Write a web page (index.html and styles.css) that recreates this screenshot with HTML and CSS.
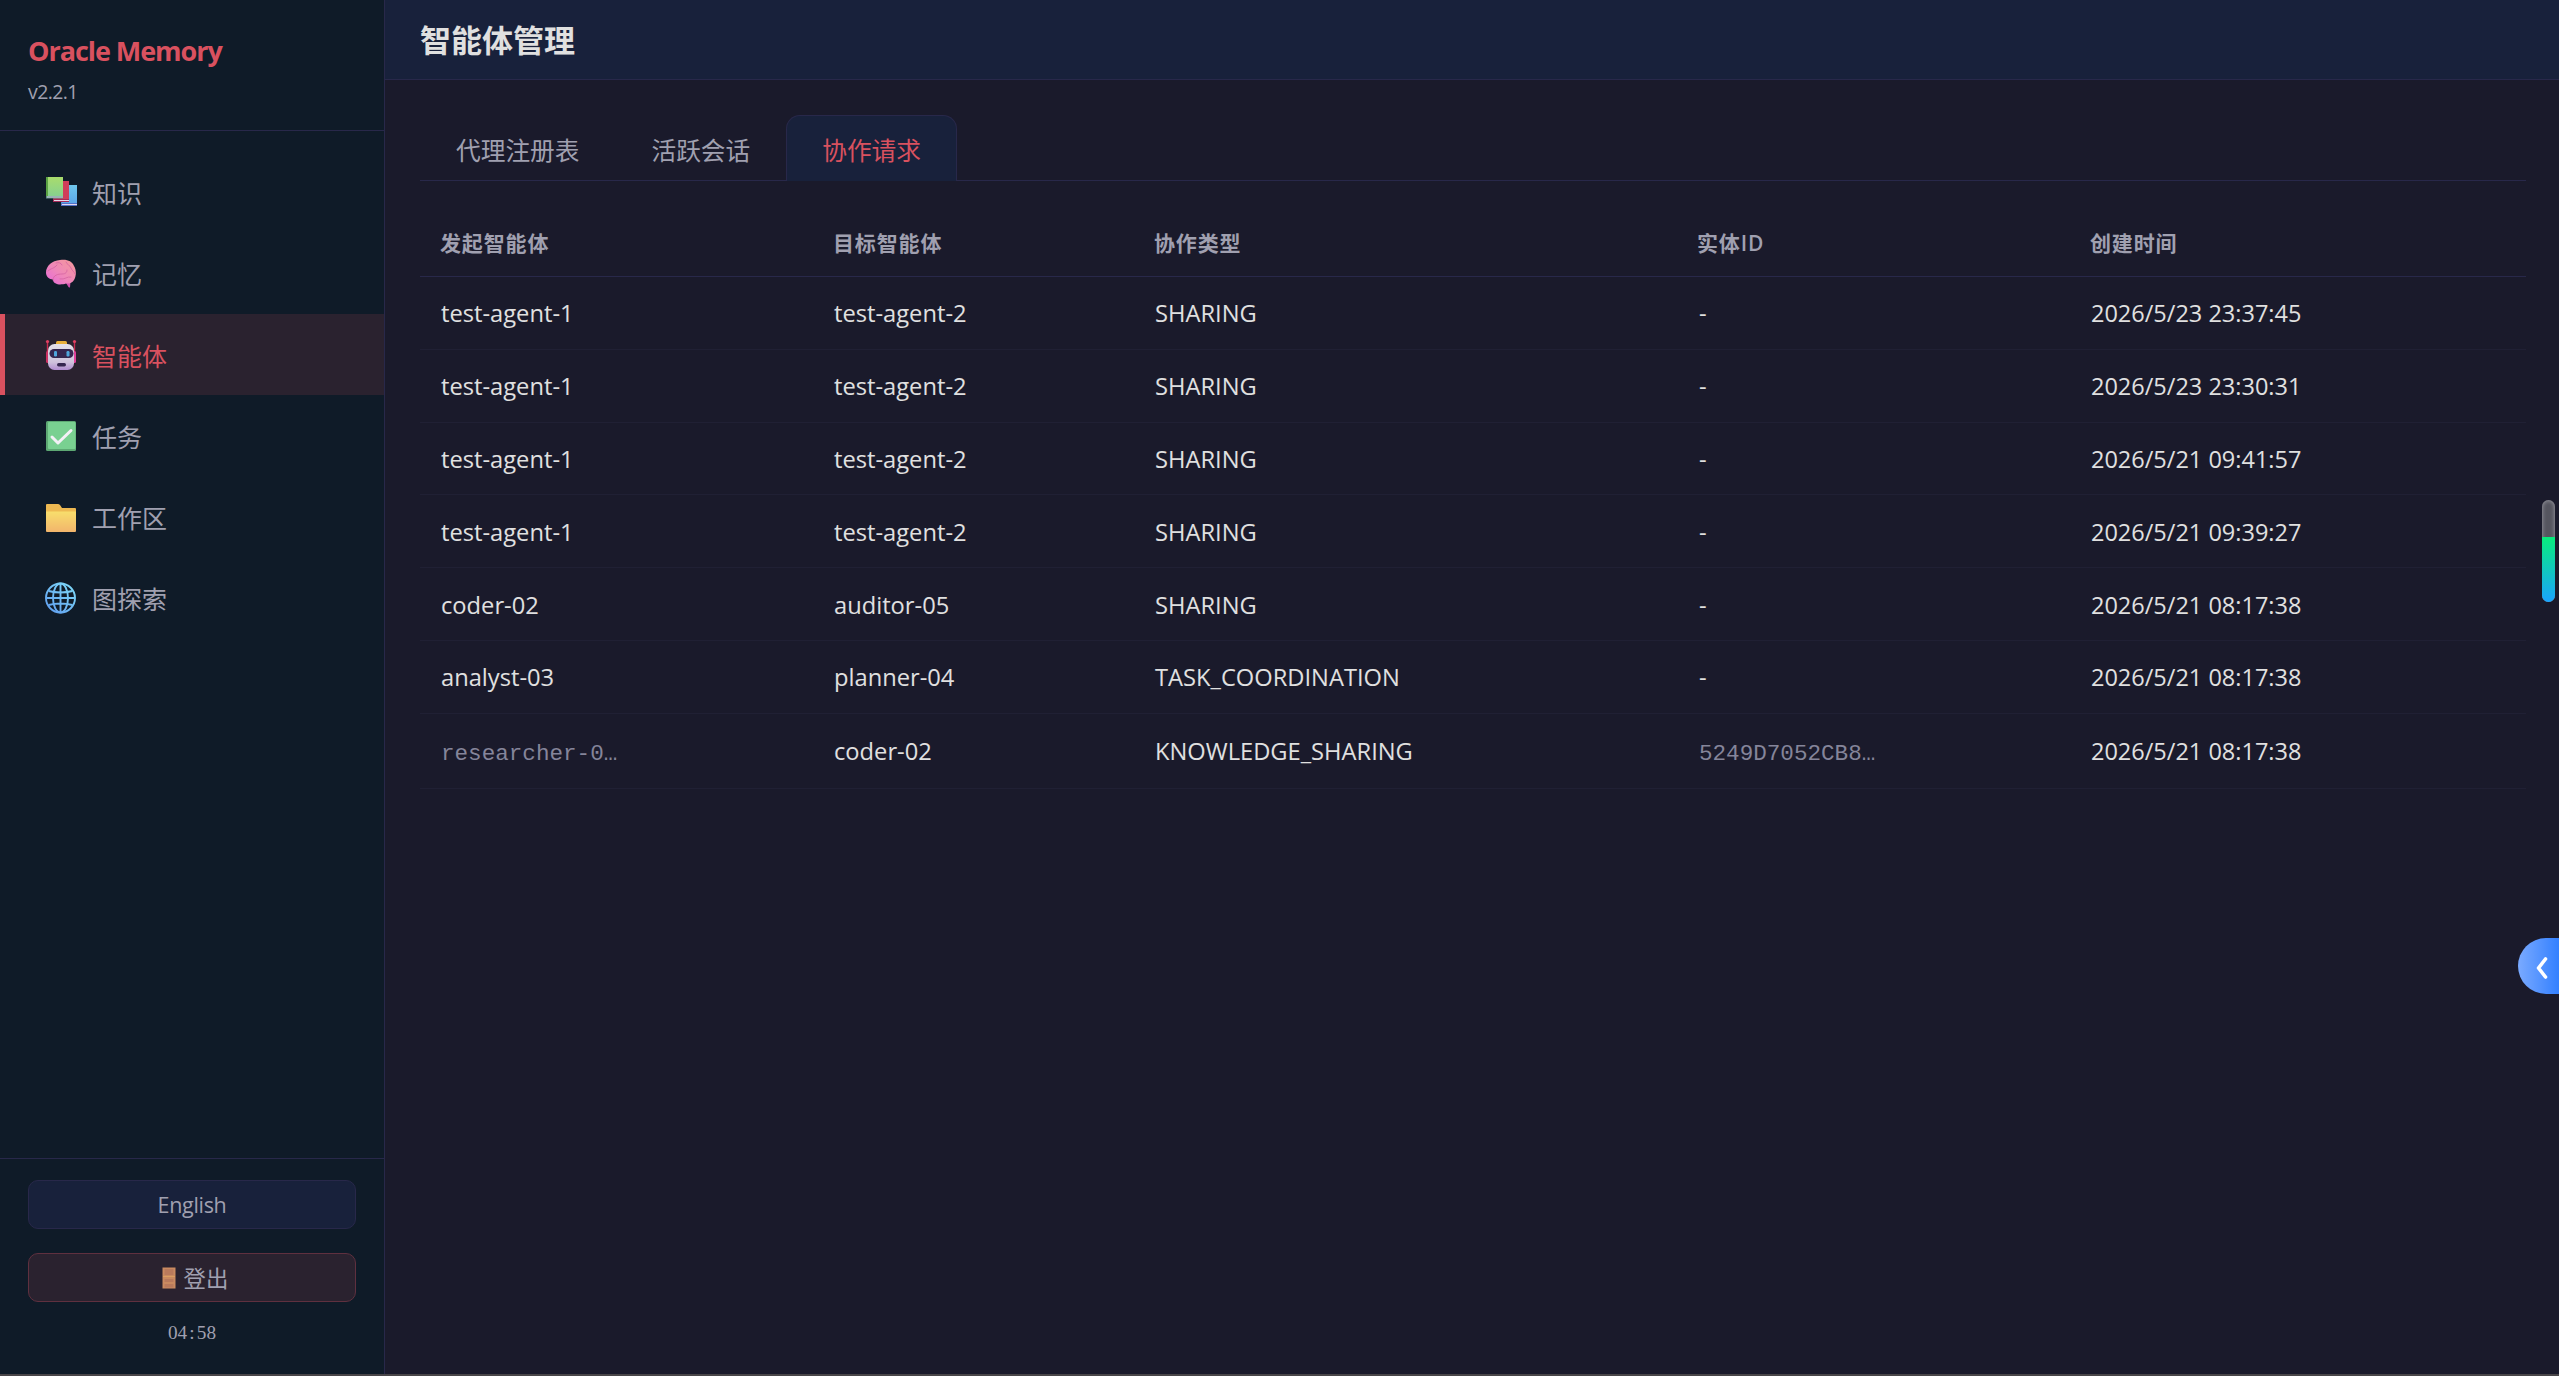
FILE: index.html
```html
<!DOCTYPE html>
<html lang="zh-CN">
<head>
    <meta charset="UTF-8">
    <meta name="viewport" content="width=device-width, initial-scale=1.0">
    <title>Oracle Memory</title>
    <link rel="stylesheet" href="styles.css">
</head>
<body>
<div class="app">
    <aside class="sidebar">
        <div class="sidebar-header">
            <h1>Oracle Memory</h1>
            <span class="version">v2.2.1</span>
        </div>
        <nav class="nav">
            <a class="nav-item">
                <svg class="nav-icon" viewBox="0 0 32 32">
                    <defs>
                        <linearGradient id="bookGreen" x1="0" y1="0" x2="0" y2="1"><stop offset="0" stop-color="#a9dc6c"/><stop offset="1" stop-color="#85d090"/></linearGradient>
                        <linearGradient id="bookBlue" x1="0" y1="0" x2="0" y2="1"><stop offset="0" stop-color="#6fc6ec"/><stop offset="1" stop-color="#5aa4e8"/></linearGradient>
                    </defs>
                    <path d="M17 9h15v20h-16z" fill="url(#bookBlue)"/>
                    <path d="M16 27h16v3H16z" fill="#5472c8"/>
                    <path d="M17 28h15v1H17z" fill="#e2d8f0"/>
                    <path d="M9 5h15v20H8z" fill="#cf3d5a"/>
                    <path d="M8 23h16v3H8z" fill="#a52a58"/>
                    <path d="M9 24h15v1H9z" fill="#e8d8ea"/>
                    <path d="M1 1h17v20H1z" fill="url(#bookGreen)"/>
                    <path d="M1 1h2v19l-2 2z" fill="#5ba344"/>
                    <path d="M1 20h17v2.500H1z" fill="#5c8c84"/>
                    <path d="M2 20.500h16v1H2z" fill="#d8d8e6"/>
                </svg>
                <span>知识</span>
            </a>
            <a class="nav-item">
                <svg class="nav-icon" viewBox="0 0 32 32">
                    <defs>
                        <linearGradient id="brain" x1="1" y1="0" x2="0" y2="1"><stop offset="0" stop-color="#f39a98"/><stop offset=".55" stop-color="#ef86ba"/><stop offset="1" stop-color="#e667dc"/></linearGradient>
                    </defs>
                    <path d="M21 26l2.500 4q1 1 1.500 0l.500-5z" fill="#d04fae"/>
                    <path d="M15 3C22 2 27 4 29 9c2.500 4 2.500 10 0 14-2 3-5 4-8 3.500-3 1-8 1.500-10 0-2-.500-3-2-3-4-4 0-7-3-7-7C1 9 7 3.500 15 3z" fill="url(#brain)"/>
                    <path d="M3 14c3-3 6-2 9-6M8 23c0-5 5-6 9-6s5-2 5-4M11 6c3-1 5 0 6 2M21 5c1 3 4 3 5 6s3 3 4 6M15 22c5 1 7-3 11-2" fill="none" stroke="#d868a4" stroke-width="0.900" stroke-linecap="round"/>
                </svg>
                <span>记忆</span>
            </a>
            <a class="nav-item active">
                <svg class="nav-icon" viewBox="0 0 32 32">
                    <defs>
                        <linearGradient id="robot" x1="0" y1="0" x2="0" y2="1"><stop offset="0" stop-color="#e6e2ea"/><stop offset=".7" stop-color="#cfc2dc"/><stop offset="1" stop-color="#b18cd0"/></linearGradient>
                    </defs>
                    <path d="M2.500 2v12M29.500 2v12" stroke="#c92a50" stroke-width="1.400"/>
                    <circle cx="2.500" cy="2.500" r="1.600" fill="#e04062"/>
                    <circle cx="29.500" cy="2.500" r="1.600" fill="#e04062"/>
                    <rect x="1" y="12" width="4" height="12" rx="1.500" fill="#cc3162"/>
                    <rect x="27" y="12" width="4" height="12" rx="1.500" fill="#e0409a"/>
                    <rect x="11" y="2" width="11" height="5" rx="1.500" fill="#eab13c"/>
                    <rect x="3" y="5" width="26" height="26" rx="6.500" fill="url(#robot)"/>
                    <rect x="4.500" y="10" width="24" height="9" rx="4.500" fill="#35264f"/>
                    <rect x="9" y="12" width="3" height="5.500" rx="1.200" fill="#4fa5dc"/>
                    <rect x="21.500" y="12" width="3" height="5.500" rx="1.200" fill="#4fa5dc"/>
                    <rect x="12" y="24" width="9" height="3.500" rx="1.700" fill="#35264f"/>
                </svg>
                <span>智能体</span>
            </a>
            <a class="nav-item">
                <svg class="nav-icon" viewBox="0 0 32 32">
                    <rect x="1" y="1" width="30" height="30" rx="1.500" fill="#5da873"/>
                    <rect x="3" y="2" width="27.500" height="27" rx="1" fill="#79d091"/>
                    <path d="M7 17l6 6L26 10.500" fill="none" stroke="#f3f0f6" stroke-width="3" stroke-linecap="round" stroke-linejoin="round"/>
                </svg>
                <span>任务</span>
            </a>
            <a class="nav-item">
                <svg class="nav-icon" viewBox="0 0 32 32">
                    <defs>
                        <linearGradient id="folder" x1="0" y1="0" x2="0" y2="1"><stop offset="0" stop-color="#f8de6c"/><stop offset="1" stop-color="#f2b56c"/></linearGradient>
                    </defs>
                    <path d="M1 4q0-1 1-1h11q1 0 2 1l2 3h13q1 0 1 1v8H1z" fill="#eeb952"/>
                    <path d="M1 10.500h30V30q0 1-1 1H2q-1 0-1-1z" fill="url(#folder)"/>
                </svg>
                <span>工作区</span>
            </a>
            <a class="nav-item">
                <svg class="nav-icon" viewBox="0 0 32 32">
                    <defs>
                        <linearGradient id="globe" gradientUnits="userSpaceOnUse" x1="26" y1="4" x2="5" y2="28"><stop offset="0" stop-color="#7cd6f8"/><stop offset="1" stop-color="#62a2f0"/></linearGradient>
                    </defs>
                    <g fill="none" stroke="url(#globe)" stroke-width="1.900">
                        <circle cx="15.500" cy="16" r="14.500"/>
                        <ellipse cx="15.500" cy="16" rx="7.500" ry="14.500"/>
                        <path d="M15.500 1.500v29M1 16h29M3.500 9q12 3 24 0M3.500 23q12-3 24 0"/>
                    </g>
                </svg>
                <span>图探索</span>
            </a>
        </nav>
        <div class="sidebar-footer">
            <button class="btn-lang">English</button>
            <button class="btn-logout">
                <svg class="door" viewBox="0 0 14 22">
                    <rect x="0.500" y="0.500" width="13" height="21" fill="#c98a60"/>
                    <path d="M2.500 2h9v6h-9zM2.500 12h9v3h-9zM2.500 17h9v3.500h-9z" fill="#b97a5c"/>
                    <path d="M1 9.500h12" stroke="#dc9e62"/>
                </svg>
                <span>登出</span>
            </button>
            <div class="timer">04<span>:</span>58</div>
        </div>
    </aside>

    <main class="main">
        <header class="topbar">
            <h2>智能体管理</h2>
        </header>
        <section class="content">
            <div class="tabs">
                <button class="tab">代理注册表</button>
                <button class="tab">活跃会话</button>
                <button class="tab active">协作请求</button>
            </div>
            <table class="data-table">
                <colgroup>
                    <col class="col-source">
                    <col class="col-target">
                    <col class="col-type">
                    <col class="col-entity">
                    <col>
                </colgroup>
                <thead>
                    <tr><th>发起智能体</th><th>目标智能体</th><th>协作类型</th><th>实体<span class="latin">ID</span></th><th>创建时间</th></tr>
                </thead>
                <tbody>
                    <tr><td>test-agent-1</td><td>test-agent-2</td><td>SHARING</td><td>-</td><td>2026/5/23 23:37:45</td></tr>
                    <tr><td>test-agent-1</td><td>test-agent-2</td><td>SHARING</td><td>-</td><td>2026/5/23 23:30:31</td></tr>
                    <tr><td>test-agent-1</td><td>test-agent-2</td><td>SHARING</td><td>-</td><td>2026/5/21 09:41:57</td></tr>
                    <tr><td>test-agent-1</td><td>test-agent-2</td><td>SHARING</td><td>-</td><td>2026/5/21 09:39:27</td></tr>
                    <tr><td>coder-02</td><td>auditor-05</td><td>SHARING</td><td>-</td><td>2026/5/21 08:17:38</td></tr>
                    <tr><td>analyst-03</td><td>planner-04</td><td>TASK_COORDINATION</td><td>-</td><td>2026/5/21 08:17:38</td></tr>
                    <tr class="tall"><td><span class="mono">researcher-0…</span></td><td>coder-02</td><td>KNOWLEDGE_SHARING</td><td><span class="mono">5249D7052CB8…</span></td><td>2026/5/21 08:17:38</td></tr>
                </tbody>
            </table>
        </section>
    </main>
</div>

<!-- Floating widgets -->
<div class="meter"><div class="meter-fill"></div></div>
<button class="drawer-toggle">
    <svg viewBox="0 0 12 22"><path d="M9.500 2L2.500 11l7 9" fill="none" stroke="#fff" stroke-width="3.600" stroke-linecap="round" stroke-linejoin="round"/></svg>
</button>
</body>
</html>
```
FILE: styles.css
```css
* {
    box-sizing: border-box;
    margin: 0;
    padding: 0;
}
body {
    font-family: "Open Sans", "Noto Sans CJK SC", sans-serif;
    font-size: 24.5px;
    background-color: #1a1a2b;
    color: #e0e0e0;
    overflow: hidden;
}
button {
    font-family: inherit;
}
.app {
    display: flex;
    height: 100vh;
    border-bottom: 2px solid #484548;
}

/* Sidebar */
.sidebar {
    display: flex;
    flex-direction: column;
    width: 385px;
    background-color: #0f1b28;
    border-right: 1px solid #28284a;
}
.sidebar-header {
    height: 131px;
    padding: 32px 28px 0;
    border-bottom: 1px solid #28284a;
}
.sidebar-header h1 {
    font-size: 27px;
    line-height: 38px;
    letter-spacing: -1.05px;
    color: #d9515f;
}
.version {
    display: block;
    margin-top: 7px;
    font-size: 19.5px;
    line-height: 30px;
    letter-spacing: -0.6px;
    color: #a0a0b0;
}
.nav {
    flex: 1;
    padding-top: 20.6px;
}
.nav-item {
    display: flex;
    align-items: center;
    gap: 15px;
    height: 81.2px;
    padding-left: 40px;
    border-left: 5px solid transparent;
    color: #a0a0b0;
    font-size: 25px;
}
.nav-item.active {
    background-color: #2a222f;
    border-left-color: #d9515f;
    color: #d9515f;
}
.nav-icon {
    width: 32px;
    height: 32px;
}
.sidebar-footer {
    height: 216px;
    padding: 21px 28px 0;
    border-top: 1px solid #28284a;
}
.btn-lang,
.btn-logout {
    display: flex;
    align-items: center;
    justify-content: center;
    width: 100%;
    height: 49px;
    border: 1px solid #28284a;
    border-radius: 10px;
    background-color: #18213b;
    color: #a0a0b0;
    font-size: 21.5px;
    letter-spacing: -0.3px;
}
.btn-logout {
    gap: 8px;
    margin-top: 24px;
    padding-left: 6px;
    background-color: #2a222f;
    border-color: #5f303f;
    font-size: 22.4px;
    letter-spacing: 0;
}
.door {
    width: 14px;
    height: 22px;
}
.timer {
    margin-top: 17px;
    text-align: center;
    font-family: "Liberation Serif", serif;
    font-size: 19.25px;
    line-height: 28px;
    color: #a0a0b0;
}
.timer span {
    display: inline-block;
    width: 0.5em;
}

/* Main area */
.main {
    flex: 1;
}
.topbar {
    display: flex;
    align-items: center;
    height: 80px;
    padding: 0 35px;
    background-color: #18213b;
    border-bottom: 1px solid #28284a;
}
.topbar h2 {
    font-size: 31px;
    line-height: 40px;
}
.content {
    padding: 35px 33px 0 35px;
}
.tabs {
    display: flex;
    height: 66px;
    margin-bottom: 35px;
    border-bottom: 1px solid #28284a;
}
.tab {
    height: 66px;
    padding: 0 35px;
    border: 1px solid transparent;
    border-bottom: none;
    border-radius: 14px 14px 0 0;
    background: none;
    color: #a0a0b0;
    font-size: 24.7px;
}
.tab.active {
    background-color: #18213b;
    border-color: #28284a;
    color: #d9515f;
}

/* Table */
.data-table {
    width: 100%;
    table-layout: fixed;
    border-collapse: separate;
    border-spacing: 0;
}
.col-source {
    width: 393px;
}
.col-target {
    width: 321px;
}
.col-type {
    width: 543px;
}
.col-entity {
    width: 393px;
}
.data-table th {
    height: 61px;
    padding: 0 21px 9px 20px;
    border-bottom: 1px solid #28284a;
    text-align: left;
    font-size: 21px;
    letter-spacing: 0.875px;
    color: #a0a0b0;
}
.latin {
    font-weight: 600;
}
.data-table td {
    height: 72.8px;
    padding: 1px 21px 0;
    border-bottom: 1px solid #202034;
    font-size: 23.7px;
}
.data-table td:nth-child(4) {
    padding-left: 22px;
}
.data-table td:last-child {
    font-size: 23.5px;
}
.data-table .tall td {
    height: 75px;
}
.mono {
    font-family: "Liberation Mono", monospace;
    font-size: 22.6px;
    color: #85859a;
}

/* Floating widgets */
.meter {
    position: fixed;
    top: 500px;
    right: 4px;
    width: 13px;
    height: 102px;
    border-radius: 7px;
    background-color: #55555f;
    box-shadow: inset 0 0 4px #a5a5ad;
    overflow: hidden;
}
.meter-fill {
    height: 65px;
    margin-top: 37px;
    background: linear-gradient(#08ec7c, #1aa4ff);
}
.drawer-toggle {
    position: fixed;
    top: 938px;
    right: 0;
    width: 41px;
    height: 56px;
    padding-left: 12px;
    border: none;
    border-radius: 28px 0 0 28px;
    background: linear-gradient(90deg, #7aaaff, #3380ff);
}
.drawer-toggle svg {
    display: block;
    width: 12px;
    height: 22px;
    margin: 4px auto 0 6px;
}
```
